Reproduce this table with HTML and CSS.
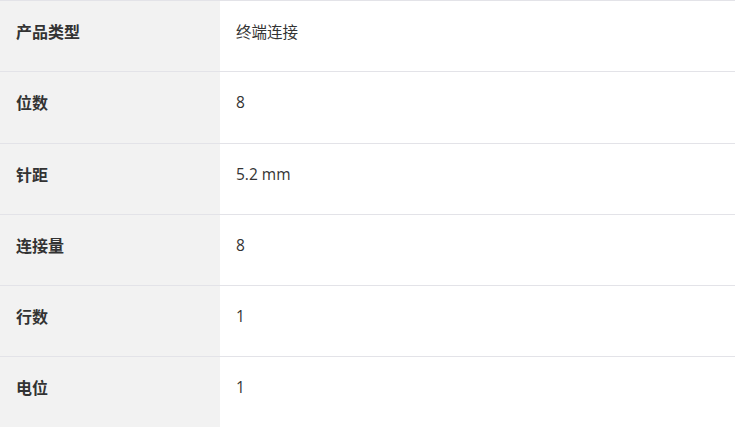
FILE: index.html
```html
<!DOCTYPE html>
<html lang="zh">
<head>
<meta charset="utf-8">
<link rel="stylesheet" href="styles.css">
</head>
<body>
<div class="spec">
  <div class="row"><div class="label">产品类型</div><div class="value">终端连接</div></div>
  <div class="row"><div class="label">位数</div><div class="value">8</div></div>
  <div class="row"><div class="label">针距</div><div class="value">5.2 mm</div></div>
  <div class="row"><div class="label">连接量</div><div class="value">8</div></div>
  <div class="row"><div class="label">行数</div><div class="value">1</div></div>
  <div class="row"><div class="label">电位</div><div class="value">1</div></div>
</div>
</body>
</html>
```
FILE: styles.css
```css
html, body {
  margin: 0;
  padding: 0;
  background: #fff;
}
body {
  font-family: "Open Sans", "Noto Sans CJK SC", sans-serif;
  font-size: 16px;
  color: #333;
}
.spec {
  width: 735px;
}
.row {
  display: grid;
  grid-template-columns: 220px 1fr;
  height: 71.25px;
  box-sizing: border-box;
  border-top: 1px solid #e3e3e8;
}
.label, .value {
  display: flex;
  align-items: center;
  padding: 0 16px 10px;
}
.label {
  background: #f2f2f2;
  font-weight: 700;
  font-family: "Noto Sans CJK SC", sans-serif;
}
.value {
  font-size: 15.5px;
}
```
